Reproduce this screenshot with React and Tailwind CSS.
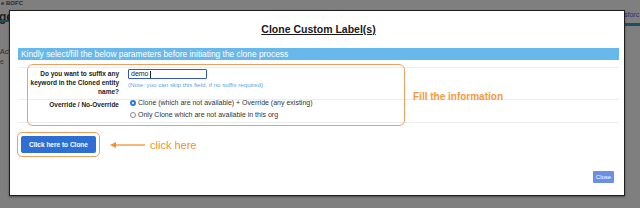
import React from 'react';

const font = { fontFamily: '"Liberation Sans", Arial, sans-serif' };

function Radio({ checked }) {
  return checked ? (
    <span className="inline-flex w-[6px] h-[6px] rounded-full bg-[#2b7be4] items-center justify-center mr-[2px]">
      <span className="w-[2px] h-[2px] rounded-full bg-white" />
    </span>
  ) : (
    <span className="inline-block w-[6px] h-[6px] rounded-full border border-[#8a8a8a] bg-white mr-[2px]" />
  );
}

export default function App() {
  return (
    <div className="relative w-[640px] h-[208px] overflow-hidden bg-[#7f7f7f]" style={font}>
      {/* page behind the overlay */}
      <div className="absolute left-[1px] top-[0px] text-[6px] leading-[7px] font-bold text-[#2a2a2a]">e BOFC</div>
      <div className="absolute left-[-1px] top-[11px] text-[12px] leading-[12px] font-bold text-[#1c1c1c]">ge</div>
      <div className="absolute left-0 top-[20px] w-[10px] h-[2px] bg-[#1f4f5c]" />
      <div className="absolute left-0 top-[48px] text-[7px] leading-[8px] text-[#2a2a2a]">Act</div>
      <div className="absolute left-0 top-[58px] text-[7px] leading-[8px] text-[#3a3a3a]">e</div>
      <div className="absolute left-[624px] top-[11px] text-[7px] leading-[8px] text-[#2c2c66]">sforc</div>
      <div className="absolute left-[624px] top-[23px] w-[16px] h-[3px] bg-[#1f4f5c]" />

      {/* modal */}
      <div className="absolute left-[9px] top-[10px] w-[616px] h-[186px] bg-white border border-[#1e1e1e] shadow-[0_1px_2px_rgba(0,0,0,0.4)] pl-[8px] pr-[5px]">
        <div className="h-[37px] flex items-center justify-center">
          <h2 className="text-[10.5px] leading-[13px] font-bold text-[#1a1a1a] underline underline-offset-[1px]">Clone Custom Label(s)</h2>
        </div>

        <div className="h-[12px] bg-[#66b9ea] text-white text-[8.4px] leading-[12px] pl-[3px]">
          Kindly select/fill the below parameters before initiating the clone process
        </div>

        {/* parameter table */}
        <div className="mt-[7px] border-t border-b border-[#ececec]">
          <div className="flex h-[31px] pt-[1px]">
            <div className="w-[101px] text-right text-[6.5px] leading-[9px] font-bold text-[#222]">
              Do you want to suffix any<br />keyword in the Cloned entity<br />name?
            </div>
            <div className="ml-[9px]">
              <div className="w-[79px] h-[10px] border border-[#3557c5] rounded-[1px] flex items-center pl-[2px] text-[7px] text-[#222]">
                demo<span className="w-px h-[7px] bg-[#222] ml-px" />
              </div>
              <div className="mt-[2px] text-[6.2px] leading-[8px] text-[#5aa6e0]">
                (Note: you can skip this field, if no suffix required)
              </div>
            </div>
          </div>
          <div className="flex h-[23px] border-t border-[#ececec]">
            <div className="w-[101px] text-right text-[6.5px] leading-[9px] font-bold text-[#222]">
              Override / No-Override
            </div>
            <div className="ml-[11px] -mt-[3px] text-[7px] leading-[12px] text-[#333]">
              <div className="flex items-center"><Radio checked />Clone (which are not available) + Override (any existing)</div>
              <div className="flex items-center"><Radio />Only Clone which are not available in this org</div>
            </div>
          </div>
        </div>

        {/* clone button + annotation */}
        <div className="mt-[9px] flex items-center">
          <div className="-ml-[1px] border-[1.5px] border-[#eea062] rounded-[5px] p-[3px]">
            <button className="block w-[75px] h-[17px] bg-[#2f6fd2] rounded-[2px] text-white text-[6.5px] leading-[17px] font-bold">
              Click here to Clone
            </button>
          </div>
          <svg width="36" height="8" viewBox="0 0 36 8" className="ml-[10px]">
            <line x1="3" y1="4" x2="35" y2="4" stroke="#f0922e" strokeWidth="1.3" />
            <path d="M0 4 L6 1 L6 7 Z" fill="#f0922e" />
          </svg>
          <span className="ml-[4px] text-[11px] leading-[12px] text-[#f0922e]">click here</span>
        </div>

        <div className="mt-[14px] flex justify-end pr-[5px]">
          <button className="block w-[21px] h-[12px] bg-[#6c8fe6] rounded-[1px] text-white text-[6px] leading-[12px]">Close</button>
        </div>

        {/* annotation overlays */}
        <div className="absolute left-[17px] top-[53px] w-[378px] h-[62px] border-[1.5px] border-[#eea062] rounded-[6px] pointer-events-none" />
        <div className="absolute left-[403px] top-[80px] text-[10px] leading-[12px] font-bold text-[#f29a3c]">Fill the information</div>
      </div>
    </div>
  );
}
